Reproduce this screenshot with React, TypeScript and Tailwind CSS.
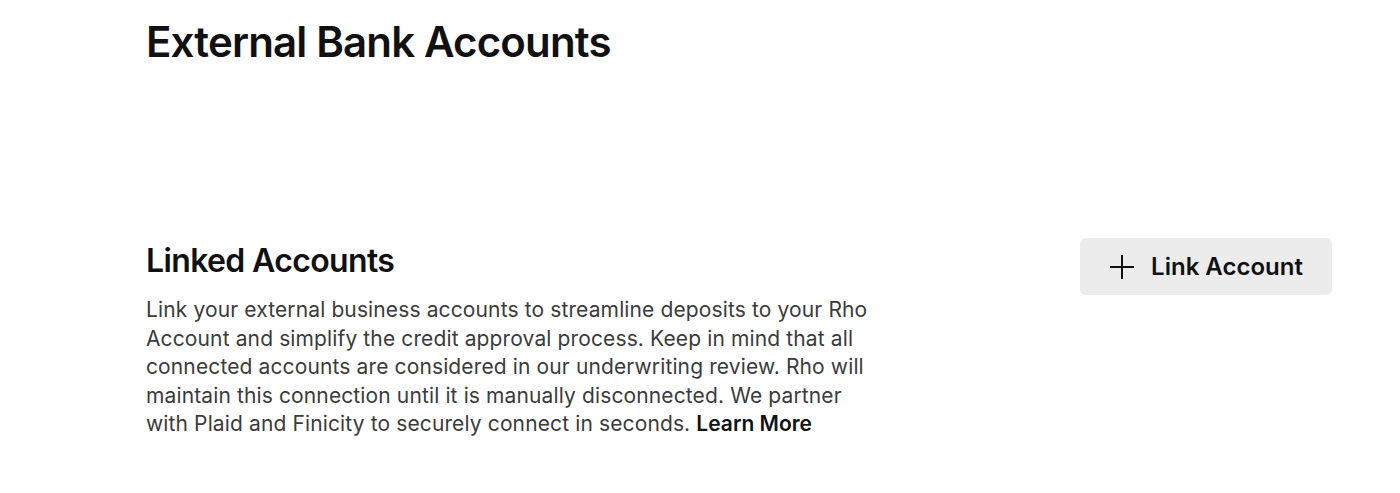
export default function App() {
  return (
    <div className="w-[1400px] h-[493px] bg-white text-black font-['Inter',sans-serif] overflow-hidden">
      <div className="pl-[146px] pr-[68px]">
        <h1 className="pt-[14px] text-[42px] leading-[56px] font-semibold tracking-[-0.02em] text-[#111]">
          External Bank Accounts
        </h1>

        <div className="mt-[171px] flex justify-between items-start">
          <div className="w-[760px]">
            <h2 className="text-[32px] leading-[40px] font-semibold tracking-[-0.02em] text-[#111]">
              Linked Accounts
            </h2>
            <p className="mt-[15px] text-[21px] leading-[28.5px] tracking-[0.006em] text-[#3b3b3b]">
              Link your external business accounts to streamline deposits to your Rho
              <br />
              Account and simplify the credit approval process. Keep in mind that all
              <br />
              connected accounts are considered in our underwriting review. Rho will
              <br />
              maintain this connection until it is manually disconnected. We partner
              <br />
              with Plaid and Finicity to securely connect in seconds.{' '}
              <a href="#" className="font-semibold tracking-normal text-[#111]">
                Learn More
              </a>
            </p>
          </div>

          <button className="mt-[-3px] w-[252px] h-[57px] rounded-[6px] bg-[#ececec] flex items-center justify-center gap-[16px] text-[24px] font-semibold text-[#111]">
            <svg width="26" height="26" viewBox="0 0 26 26" fill="none" stroke="currentColor" strokeWidth="2">
              <path d="M13 1v24M1 13h24" />
            </svg>
            Link Account
          </button>
        </div>
      </div>
    </div>
  );
}
